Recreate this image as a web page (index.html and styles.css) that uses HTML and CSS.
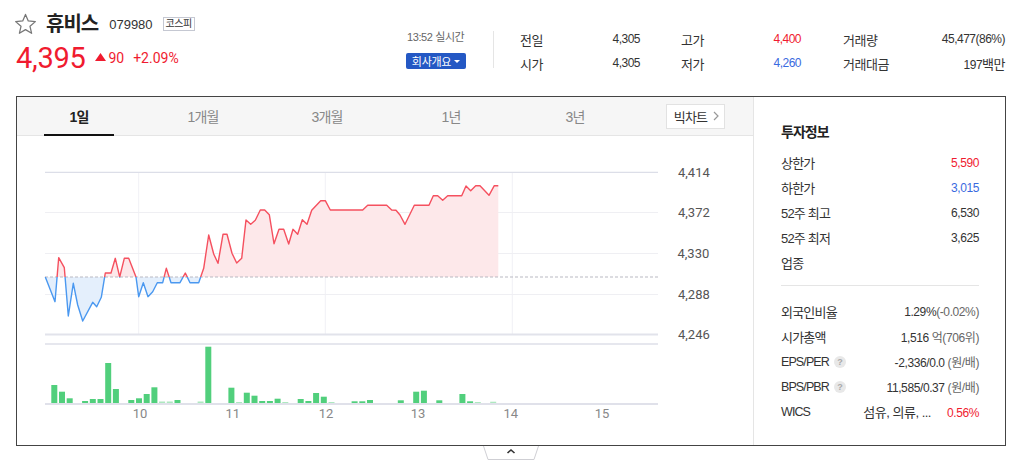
FILE: index.html
```html
<!DOCTYPE html>
<html lang="ko">
<head>
<meta charset="utf-8">
<title>휴비스</title>
<link rel="stylesheet" href="styles.css">
</head>
<body>
<div class="top">
  <div class="stock">
    <div class="title-row">
      <svg class="star" viewBox="0 0 24 23"><polygon points="12,1.5 14.9,8.3 22.3,9 16.7,13.9 18.4,21.2 12,17.4 5.6,21.2 7.3,13.9 1.7,9 9.1,8.3" fill="none" stroke="#777" stroke-width="1.3" stroke-linejoin="round"/></svg>
      <span class="name">휴비스</span>
      <span class="code">079980</span>
      <span class="market">코스피</span>
    </div>
    <div class="price-row">
      <span class="price">4,395</span>
      <span class="change"><svg class="tri" viewBox="0 0 11 8"><polygon points="5.5,0 11,8 0,8" fill="#f01b2f"/></svg>90</span>
      <span class="rate">+2.09%</span>
    </div>
  </div>
  <div class="realtime">
    <div class="time">13:52 실시간</div>
    <button class="company">회사개요 <svg class="caret" viewBox="0 0 6 3"><polygon points="0,0 6,0 3,3" fill="#fff"/></svg></button>
  </div>
  <div class="vsep"></div>
  <div class="quotes">
    <div class="qcol qcol1">
      <div class="qrow"><span class="ql">전일</span><span class="qv">4,305</span></div>
      <div class="qrow"><span class="ql">시가</span><span class="qv">4,305</span></div>
    </div>
    <div class="qcol qcol2">
      <div class="qrow"><span class="ql">고가</span><span class="qv up">4,400</span></div>
      <div class="qrow"><span class="ql">저가</span><span class="qv down">4,260</span></div>
    </div>
    <div class="qcol qcol3">
      <div class="qrow"><span class="ql">거래량</span><span class="qv">45,477(86%)</span></div>
      <div class="qrow"><span class="ql">거래대금</span><span class="qv">197<span class="kr">백만</span></span></div>
    </div>
  </div>
</div>

<div class="board">
  <div class="chart-panel">
    <div class="tabs">
      <div class="tab active">1일</div>
      <div class="tab">1개월</div>
      <div class="tab">3개월</div>
      <div class="tab">1년</div>
      <div class="tab">3년</div>
      <div class="bigchart">빅차트 <svg class="chev" viewBox="0 0 6 10"><polyline points="1,1 5,5 1,9" fill="none" stroke="#999" stroke-width="1.2"/></svg></div>
    </div>
    <svg class="chart" width="736" height="309" viewBox="17 136 736 309">
      <defs>
        <clipPath id="above"><rect x="0" y="0" width="1000" height="277"/></clipPath>
        <clipPath id="below"><rect x="0" y="277" width="1000" height="200"/></clipPath>
      </defs>
      <g stroke="#f1f1f5" stroke-width="1">
        <line x1="138.7" y1="172" x2="138.7" y2="334"/>
        <line x1="325.3" y1="172" x2="325.3" y2="334"/>
        <line x1="512.3" y1="172" x2="512.3" y2="334"/>
      </g>
      <g stroke="#efeff3" stroke-width="1">
        <line x1="45" y1="212.5" x2="658" y2="212.5"/>
        <line x1="45" y1="253.5" x2="658" y2="253.5"/>
        <line x1="45" y1="294.5" x2="658" y2="294.5"/>
      </g>
      <line x1="45" y1="172.3" x2="658" y2="172.3" stroke="#dcdee8" stroke-width="1.3"/>
      <line x1="45" y1="334.5" x2="658" y2="334.5" stroke="#e2e3eb" stroke-width="2"/>
      <line x1="45" y1="344" x2="658" y2="344" stroke="#e6e7ee" stroke-width="2"/>
      <line x1="45" y1="404" x2="658" y2="404" stroke="#e0e1ea" stroke-width="2"/>

      <polygon clip-path="url(#above)" fill="#fde8ea" points="45.3,277 55,301.7 58.7,257.7 64.3,267.7 68.3,316 73.3,283.3 77.7,305 82.7,321 92.7,302.3 96.7,306.7 101.3,297.3 105.3,273 111,273 115.3,258.3 119.7,277 124.3,258.3 128.7,258.3 136,277 138.7,296.7 143.3,282.7 148,296.7 152.7,291.7 157.3,282.7 162.7,282.7 166.3,268.3 171,282.7 180,282.7 185.3,273 190,282.7 198.7,282.7 203.7,268.3 208.7,235 213.7,254 218,263.3 223,234.3 227,234.3 232,253.3 236.7,263 241.7,258.3 246,220 250.7,224.3 255.3,220.3 260.3,210 264.7,210 269.3,214.7 274,243.7 279,229.3 283.7,229.3 288.7,244 293,229.3 297.7,234.3 302.3,219.7 307,224.3 311.7,210.3 320.7,200.7 325.3,200.7 330.3,210 362.7,210 367.7,205.3 386.7,205.3 391.7,210 396,210.3 400,215 405,224.3 414.3,205.3 429,205.3 433.3,195.7 437.7,195.7 442.7,200.3 447.7,195.7 461.7,195.7 466,186 470.7,190.7 475.7,185.7 480,185.7 489,195.3 494.3,185.7 498.3,185.7 498.3,277"/>
      <polygon clip-path="url(#below)" fill="#e4effc" points="45.3,277 55,301.7 58.7,257.7 64.3,267.7 68.3,316 73.3,283.3 77.7,305 82.7,321 92.7,302.3 96.7,306.7 101.3,297.3 105.3,273 111,273 115.3,258.3 119.7,277 124.3,258.3 128.7,258.3 136,277 138.7,296.7 143.3,282.7 148,296.7 152.7,291.7 157.3,282.7 162.7,282.7 166.3,268.3 171,282.7 180,282.7 185.3,273 190,282.7 198.7,282.7 203.7,268.3 208.7,235 213.7,254 218,263.3 223,234.3 227,234.3 232,253.3 236.7,263 241.7,258.3 246,220 250.7,224.3 255.3,220.3 260.3,210 264.7,210 269.3,214.7 274,243.7 279,229.3 283.7,229.3 288.7,244 293,229.3 297.7,234.3 302.3,219.7 307,224.3 311.7,210.3 320.7,200.7 325.3,200.7 330.3,210 362.7,210 367.7,205.3 386.7,205.3 391.7,210 396,210.3 400,215 405,224.3 414.3,205.3 429,205.3 433.3,195.7 437.7,195.7 442.7,200.3 447.7,195.7 461.7,195.7 466,186 470.7,190.7 475.7,185.7 480,185.7 489,195.3 494.3,185.7 498.3,185.7 498.3,277"/>

      <line x1="45" y1="277" x2="658" y2="277" stroke="#b9b9c2" stroke-width="1" stroke-dasharray="3 2"/>

      <polyline clip-path="url(#above)" fill="none" stroke="#f5505f" stroke-width="1.4" stroke-linejoin="round" points="45.3,277 55,301.7 58.7,257.7 64.3,267.7 68.3,316 73.3,283.3 77.7,305 82.7,321 92.7,302.3 96.7,306.7 101.3,297.3 105.3,273 111,273 115.3,258.3 119.7,277 124.3,258.3 128.7,258.3 136,277 138.7,296.7 143.3,282.7 148,296.7 152.7,291.7 157.3,282.7 162.7,282.7 166.3,268.3 171,282.7 180,282.7 185.3,273 190,282.7 198.7,282.7 203.7,268.3 208.7,235 213.7,254 218,263.3 223,234.3 227,234.3 232,253.3 236.7,263 241.7,258.3 246,220 250.7,224.3 255.3,220.3 260.3,210 264.7,210 269.3,214.7 274,243.7 279,229.3 283.7,229.3 288.7,244 293,229.3 297.7,234.3 302.3,219.7 307,224.3 311.7,210.3 320.7,200.7 325.3,200.7 330.3,210 362.7,210 367.7,205.3 386.7,205.3 391.7,210 396,210.3 400,215 405,224.3 414.3,205.3 429,205.3 433.3,195.7 437.7,195.7 442.7,200.3 447.7,195.7 461.7,195.7 466,186 470.7,190.7 475.7,185.7 480,185.7 489,195.3 494.3,185.7 498.3,185.7"/>
      <polyline clip-path="url(#below)" fill="none" stroke="#4a98f0" stroke-width="1.4" stroke-linejoin="round" points="45.3,277 55,301.7 58.7,257.7 64.3,267.7 68.3,316 73.3,283.3 77.7,305 82.7,321 92.7,302.3 96.7,306.7 101.3,297.3 105.3,273 111,273 115.3,258.3 119.7,277 124.3,258.3 128.7,258.3 136,277 138.7,296.7 143.3,282.7 148,296.7 152.7,291.7 157.3,282.7 162.7,282.7 166.3,268.3 171,282.7 180,282.7 185.3,273 190,282.7 198.7,282.7 203.7,268.3 208.7,235 213.7,254 218,263.3"/>

      <g fill="#51cf7c">
        <rect x="51.3" y="385" width="6" height="18"/>
        <rect x="59" y="391.7" width="6" height="11.3"/>
        <rect x="66.7" y="398.3" width="6" height="4.7"/>
        <rect x="82.1" y="401" width="6" height="2"/>
        <rect x="89.8" y="399" width="6" height="4"/>
        <rect x="97.5" y="399" width="6" height="4"/>
        <rect x="105.2" y="363" width="6" height="40"/>
        <rect x="112.9" y="389" width="6" height="14"/>
        <rect x="128.3" y="400" width="6" height="3"/>
        <rect x="136" y="398.3" width="6" height="4.7"/>
        <rect x="143.7" y="394" width="6" height="9"/>
        <rect x="151.4" y="387.3" width="6" height="15.7"/>
        <rect x="174.5" y="400" width="6" height="3"/>
        <rect x="205.3" y="346.7" width="6" height="56.3"/>
        <rect x="228.4" y="387.7" width="6" height="15.3"/>
        <rect x="243.8" y="392.7" width="6" height="10.3"/>
        <rect x="251.5" y="395.7" width="6" height="7.3"/>
        <rect x="259.2" y="401" width="6" height="2"/>
        <rect x="266.9" y="401" width="6" height="2"/>
        <rect x="274.6" y="398.7" width="6" height="4.3"/>
        <rect x="297.7" y="399" width="6" height="4"/>
        <rect x="305.4" y="401" width="6" height="2"/>
        <rect x="313.1" y="393" width="6" height="10"/>
        <rect x="320.8" y="396.7" width="6" height="6.3"/>
        <rect x="351.6" y="401.3" width="6" height="1.7"/>
        <rect x="359.3" y="401.3" width="6" height="1.7"/>
        <rect x="367" y="400" width="6" height="3"/>
        <rect x="397.8" y="400.3" width="6" height="2.7"/>
        <rect x="413.2" y="391.7" width="6" height="11.3"/>
        <rect x="420.9" y="390.7" width="6" height="12.3"/>
        <rect x="436.3" y="400.3" width="6" height="2.7"/>
        <rect x="459.4" y="394" width="6" height="9"/>
        <rect x="467.1" y="401.3" width="6" height="1.7"/>
      </g>
      <g fill="#aee8c0">
        <rect x="159.1" y="401.5" width="6" height="1.5"/>
        <rect x="166.8" y="401.5" width="6" height="1.5"/>
        <rect x="197.6" y="401.5" width="6" height="1.5"/>
        <rect x="236.1" y="402" width="6" height="1"/>
        <rect x="282.3" y="402" width="6" height="1"/>
        <rect x="328.5" y="402" width="6" height="1"/>
        <rect x="474.8" y="402" width="6" height="1"/>
        <rect x="490.2" y="401.7" width="6" height="1.3"/>
      </g>

      <g class="ylab">
        <text x="678" y="177">4,414</text>
        <text x="678" y="217">4,372</text>
        <text x="677.5" y="258">4,330</text>
        <text x="678" y="299">4,288</text>
        <text x="678" y="339">4,246</text>
      </g>
      <g class="xlab">
        <text x="140" y="418">10</text>
        <text x="232.7" y="418">11</text>
        <text x="326" y="418">12</text>
        <text x="418" y="418">13</text>
        <text x="510.7" y="418">14</text>
        <text x="602" y="418">15</text>
      </g>
    </svg>
  </div>
  <div class="info-panel">
    <div class="info-title">투자정보</div>
    <div class="irow"><span class="il">상한가</span><span class="iv up">5,590</span></div>
    <div class="irow"><span class="il">하한가</span><span class="iv down">3,015</span></div>
    <div class="irow"><span class="il">52주 최고</span><span class="iv">6,530</span></div>
    <div class="irow"><span class="il">52주 최저</span><span class="iv">3,625</span></div>
    <div class="irow"><span class="il">업종</span><span class="iv"></span></div>
    <div class="isep"></div>
    <div class="irow"><span class="il">외국인비율</span><span class="iv">1.29%<span class="sub">(-0.02%)</span></span></div>
    <div class="irow"><span class="il">시가총액</span><span class="iv">1,516 <span class="sub">억(706위)</span></span></div>
    <div class="irow"><span class="il latin">EPS/PER <span class="help">?</span></span><span class="iv">-2,336/0.0 <span class="sub">(원/배)</span></span></div>
    <div class="irow"><span class="il latin">BPS/PBR <span class="help">?</span></span><span class="iv">11,585/0.37 <span class="sub">(원/배)</span></span></div>
    <div class="irow"><span class="il latin">WICS</span><span class="iv"><span class="sector">섬유, 의류, ...</span><span class="up">0.56%</span></span></div>
  </div>
</div>
<svg class="fold" viewBox="0 0 56 14" width="56" height="14"><polyline points="0.5,0 5,13.5 51,13.5 55.5,0" fill="#fff" stroke="#cfcfd4" stroke-width="1"/><polyline points="24.5,7 28,4 31.5,7" fill="none" stroke="#333" stroke-width="1.6"/></svg>
</body>
</html>
```

FILE: styles.css
```css
* { box-sizing: border-box; }
body {
  margin: 0;
  font-family: "Liberation Sans", "Noto Sans CJK KR", sans-serif;
  color: #333;
  background: #fff;
}
.top { display: flex; height: 96px; }
.stock { width: 406px; padding: 12px 0 0 14px; }
.title-row { display: flex; align-items: center; height: 24px; }
.star { width: 23px; height: 22px; margin-right: 9px; }
.name { font-size: 20px; font-weight: bold; color: #222; letter-spacing: -1px; line-height: 24px; }
.code { font-size: 13px; color: #333; margin-left: 11px; }
.market {
  margin-left: 10px; font-size: 10px; line-height: 12px; height: 14px;
  border: 1px solid #c5c8d2; padding: 0 2px; color: #333; letter-spacing: -0.5px;
}
.price-row {
  display: flex; align-items: center; height: 32px; margin-top: 6px; color: #f01b2f;
  padding-left: 2px; font-family: Roboto, "Liberation Sans", sans-serif;
}
.price { font-size: 29px; line-height: 32px; letter-spacing: -0.3px; }
.change { display: flex; align-items: center; margin-left: 10px; font-size: 14px; }
.tri { width: 11px; height: 8px; margin-right: 2px; margin-top: -2px; }
.rate { margin-left: 9px; font-size: 14px; }

.realtime { width: 87px; padding-top: 30px; }
.time { font-size: 11px; color: #666; line-height: 14px; padding-left: 1px; letter-spacing: -0.4px; }
.company {
  margin-top: 9px; width: 60px; height: 16px; background: #2458c4; color: #fff;
  font-size: 11px; border: 0; border-radius: 2px; padding: 0; display: flex;
  align-items: center; justify-content: center; gap: 3px; font-family: inherit; letter-spacing: -0.3px;
}
.caret { width: 6px; height: 3px; }
.vsep { width: 1px; background: #e5e5e5; height: 37px; margin-top: 31px; margin-right: 26px; }
.quotes { display: flex; padding-top: 27px; }
.qcol { display: flex; flex-direction: column; }
.qcol1 { width: 120px; margin-right: 41px; }
.qcol2 { width: 120px; margin-right: 42px; }
.qcol3 { width: 162px; }
.qrow { display: flex; justify-content: space-between; align-items: center; height: 24px; }
.ql { font-size: 13px; color: #333; letter-spacing: -0.5px; }
.qv { font-size: 12px; letter-spacing: -0.5px; color: #333; }
.kr { font-size: 13px; letter-spacing: -0.5px; }
.up, .qv.up, .iv.up { color: #f01b2f; }
.down, .qv.down, .iv.down { color: #3a6ae0; }

.board {
  margin-left: 16px; width: 990px; height: 350px;
  border: 1px solid #444; display: flex;
}
.chart-panel { width: 737px; border-right: 1px solid #e5e5e5; }
.tabs {
  display: flex; align-items: center; height: 39px;
  background: #f6f6f6; border-bottom: 1px solid #e5e5e5;
}
.tab {
  position: relative; width: 124px; height: 38px; display: flex;
  align-items: center; justify-content: center; font-size: 14px; color: #888; letter-spacing: -0.8px;
}
.tab.active { color: #222; font-weight: bold; }
.tab.active::after {
  content: ""; position: absolute; left: 27px; width: 70px; bottom: -1px; height: 2px; background: #111;
}
.bigchart {
  margin-left: 29px; width: 59px; height: 25px; background: #fff; border: 1px solid #e2e2e2;
  font-size: 13px; color: #333; display: flex; align-items: center; justify-content: center;
  gap: 6px; letter-spacing: -0.8px; padding-left: 2px;
}
.chev { width: 6px; height: 10px; }
.chart { display: block; }
.ylab text { font-family: Roboto, "Liberation Sans", sans-serif; font-size: 13px; fill: #555; }
.xlab text { font-family: Roboto, "Liberation Sans", sans-serif; font-size: 13px; fill: #888; text-anchor: middle; }

.info-panel { width: 251px; padding: 25px 26px 0 27px; }
.info-title { font-size: 14px; font-weight: bold; line-height: 20px; margin-bottom: 8px; letter-spacing: -1px; color: #222; }
.irow { display: flex; justify-content: space-between; align-items: center; height: 25px; }
.il { font-size: 13px; color: #333; letter-spacing: -0.8px; display: flex; align-items: center; }
.il.latin { font-size: 12.5px; letter-spacing: -0.9px; }
.iv { font-size: 12px; color: #333; letter-spacing: -0.4px; }
.sub { color: #666; }
.sector { font-size: 13px; letter-spacing: -0.5px; margin-right: 16px; color: #333; }
.help {
  width: 12px; height: 12px; border-radius: 50%; background: #e8e8e8; color: #aaa;
  font-size: 9px; font-weight: bold; display: inline-flex; align-items: center; justify-content: center;
  margin-left: 5px; letter-spacing: 0;
}
.isep { border-top: 1px solid #e5e5e5; margin: 10px 0 13px; }
.fold { display: block; margin-left: 483px; }
```
